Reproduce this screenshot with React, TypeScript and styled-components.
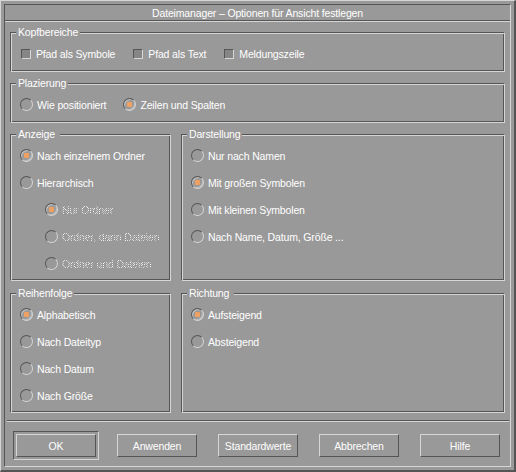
import styled, { createGlobalStyle, css } from "styled-components";

const FACE = "#999999";
const LIGHT = "#d6d6d6";
const DARK = "#555555";
const DOT = "#f0a060";

const GlobalStyle = createGlobalStyle`
  html, body {
    margin: 0;
    padding: 0;
    background: ${FACE};
  }
  body {
    font-family: "Liberation Sans", Arial, sans-serif;
  }
`;

const Window = styled.div`
  width: 516px;
  height: 472px;
  box-sizing: border-box;
  background: ${FACE};
  border-style: solid;
  border-width: 1px 2px 2px 1px;
  border-color: ${LIGHT} ${DARK} ${DARK} ${LIGHT};
  padding: 3px;
  font-size: 10.5px;
  letter-spacing: -0.15px;
  color: #fff;
`;

const Frame = styled.div`
  height: 100%;
  box-sizing: border-box;
  border: 1px solid;
  border-color: ${DARK} ${LIGHT} ${LIGHT} ${DARK};
  display: flex;
  flex-direction: column;
`;

const TitleBar = styled.div`
  height: 14px;
  padding-top: 1px;
  line-height: 15px;
  text-align: center;
  white-space: nowrap;
  border-bottom: 1px solid ${DARK};
  box-shadow: 0 1px 0 ${LIGHT};
`;

const Body = styled.div`
  flex: 1;
  padding: 11px 5px 6px;
  display: flex;
  flex-direction: column;
`;

const Group = styled.div<{ $h: number; $mt?: number }>`
  position: relative;
  height: ${(p) => p.$h}px;
  margin-top: ${(p) => p.$mt ?? 0}px;
  box-sizing: border-box;
  border: 1px solid;
  border-color: ${DARK} ${LIGHT} ${LIGHT} ${DARK};
  box-shadow: inset 1px 1px 0 ${LIGHT}, inset -1px -1px 0 ${DARK};
  padding-top: 7px;
`;

const Legend = styled.span`
  position: absolute;
  top: -7px;
  left: 5px;
  padding: 0 2px;
  line-height: 13px;
  background: ${FACE};
  white-space: pre;
`;

const Pair = styled.div<{ $h: number; $mt: number }>`
  display: grid;
  grid-template-columns: 161px 1fr;
  column-gap: 10px;
  height: ${(p) => p.$h}px;
  margin-top: ${(p) => p.$mt}px;
  & > ${Group} {
    height: 100%;
  }
`;

const InlineRow = styled.div`
  display: flex;
  align-items: center;
  height: 27px;
  padding-left: 9px;
  gap: 17px;
`;

const Option = styled.div<{ $indent?: number }>`
  display: flex;
  align-items: center;
  gap: 4px;
  height: 27px;
  padding-left: ${(p) => p.$indent ?? 0}px;
`;

const StackRow = styled(Option)`
  padding-left: ${(p) => 9 + (p.$indent ?? 0)}px;
`;

const RadioMark = styled.span<{ $on?: boolean }>`
  position: relative;
  flex: none;
  width: 13px;
  height: 13px;
  box-sizing: border-box;
  border-radius: 50%;
  border: 1px solid;
  border-color: ${DARK} ${LIGHT} ${LIGHT} ${DARK};
  ${(p) =>
    p.$on &&
    css`
      box-shadow: inset 1px 1px 0 #c4c4c4, inset -1px -1px 0 #bdbdbd;
      &::after {
        content: "";
        position: absolute;
        left: 3px;
        top: 3px;
        width: 5px;
        height: 5px;
        border-radius: 1px;
        background: ${DOT};
      }
    `}
`;

const CheckMark = styled.span`
  flex: none;
  width: 10px;
  height: 10px;
  box-sizing: border-box;
  margin: 0 1px 0 1px;
  border: 1px solid;
  border-color: ${DARK} ${LIGHT} ${LIGHT} ${DARK};
  background: #868686;
`;

const Label = styled.span<{ $disabled?: boolean }>`
  white-space: nowrap;
  line-height: 13px;
  padding-top: 1px;
  ${(p) =>
    p.$disabled &&
    css`
      color: transparent;
      background: repeating-conic-gradient(#fff 0 25%, transparent 0 50%) 0 0 / 2px 2px;
      -webkit-background-clip: text;
      background-clip: text;
    `}
`;

const Separator = styled.div`
  margin: 7px -4px 0 -3px;
  border-top: 1px solid ${DARK};
  border-bottom: 1px solid ${LIGHT};
`;

const ButtonRow = styled.div`
  display: flex;
  justify-content: space-between;
  align-items: center;
  height: 29px;
  margin-top: 9px;
  padding: 0 2px 0 3px;
`;

const ButtonSlot = styled.div<{ $default?: boolean }>`
  width: 86px;
  height: 29px;
  box-sizing: border-box;
  padding: 2px;
  border: 1px solid transparent;
  ${(p) =>
    p.$default &&
    css`
      border-color: ${DARK} ${LIGHT} ${LIGHT} ${DARK};
    `}
`;

const Button = styled.button`
  display: block;
  width: 80px;
  height: 23px;
  box-sizing: border-box;
  padding: 1px 0 0;
  background: ${FACE};
  color: #fff;
  font: inherit;
  letter-spacing: inherit;
  border: 1px solid;
  border-color: ${LIGHT} ${DARK} ${DARK} ${LIGHT};
`;

type Item = { label: string; on?: boolean; indent?: number; disabled?: boolean };

function Stack({ items }: { items: Item[] }) {
  return (
    <>
      {items.map((it) => (
        <StackRow key={it.label} $indent={it.indent}>
          <RadioMark $on={it.on} />
          <Label $disabled={it.disabled}>{it.label}</Label>
        </StackRow>
      ))}
    </>
  );
}

const anzeige: Item[] = [
  { label: "Nach einzelnem Ordner", on: true },
  { label: "Hierarchisch" },
  { label: "Nur Ordner", on: true, indent: 25, disabled: true },
  { label: "Ordner, dann Dateien", indent: 25, disabled: true },
  { label: "Ordner und Dateien", indent: 25, disabled: true },
];

const darstellung: Item[] = [
  { label: "Nur nach Namen" },
  { label: "Mit großen Symbolen", on: true },
  { label: "Mit kleinen Symbolen" },
  { label: "Nach Name, Datum, Größe ..." },
];

const reihenfolge: Item[] = [
  { label: "Alphabetisch", on: true },
  { label: "Nach Dateityp" },
  { label: "Nach Datum" },
  { label: "Nach Größe" },
];

const richtung: Item[] = [{ label: "Aufsteigend", on: true }, { label: "Absteigend" }];

const buttons = ["OK", "Anwenden", "Standardwerte", "Abbrechen", "Hilfe"];

export default function App() {
  return (
    <>
      <GlobalStyle />
      <Window>
        <Frame>
          <TitleBar>Dateimanager – Optionen für Ansicht festlegen</TitleBar>
          <Body>
            <Group $h={40}>
              <Legend>Kopfbereiche</Legend>
              <InlineRow>
                {["Pfad als Symbole", "Pfad als Text", "Meldungszeile"].map((t) => (
                  <Option key={t}>
                    <CheckMark />
                    <Label>{t}</Label>
                  </Option>
                ))}
              </InlineRow>
            </Group>

            <Group $h={40} $mt={11}>
              <Legend>Plazierung</Legend>
              <InlineRow>
                <Option>
                  <RadioMark />
                  <Label>Wie positioniert</Label>
                </Option>
                <Option>
                  <RadioMark $on />
                  <Label>Zeilen und Spalten</Label>
                </Option>
              </InlineRow>
            </Group>

            <Pair $h={147} $mt={11}>
              <Group $h={147}>
                <Legend>Anzeige </Legend>
                <Stack items={anzeige} />
              </Group>
              <Group $h={147}>
                <Legend>Darstellung</Legend>
                <Stack items={darstellung} />
              </Group>
            </Pair>

            <Pair $h={120} $mt={12}>
              <Group $h={120}>
                <Legend>Reihenfolge</Legend>
                <Stack items={reihenfolge} />
              </Group>
              <Group $h={120}>
                <Legend>Richtung </Legend>
                <Stack items={richtung} />
              </Group>
            </Pair>

            <Separator />

            <ButtonRow>
              {buttons.map((b, i) => (
                <ButtonSlot key={b} $default={i === 0}>
                  <Button>{b}</Button>
                </ButtonSlot>
              ))}
            </ButtonRow>
          </Body>
        </Frame>
      </Window>
    </>
  );
}
